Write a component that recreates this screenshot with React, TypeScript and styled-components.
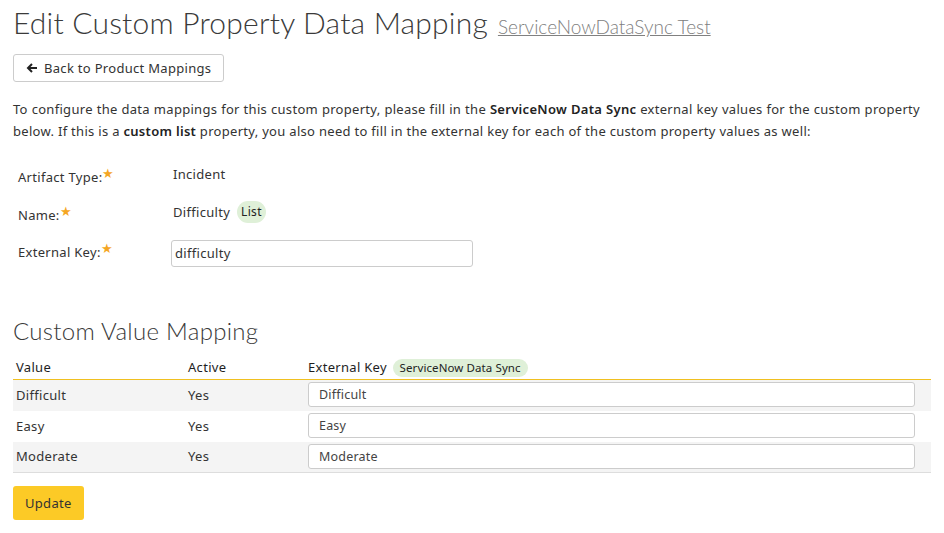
import React from 'react';
import styled, { createGlobalStyle } from 'styled-components';

const GlobalStyle = createGlobalStyle`
  body {
    margin: 0;
    background: #fff;
    color: #333;
    font-family: "Noto Sans", "Open Sans", sans-serif;
    font-size: 13px;
    letter-spacing: 0.3px;
  }
`;

const Page = styled.div`
  padding: 0 13px 14px 13px;
  width: 918px;
`;

const TitleRow = styled.div`
  display: flex;
  align-items: baseline;
  gap: 10px;
  height: 44px;
`;

const Title = styled.h1`
  margin: 0;
  font-family: "Lato", sans-serif;
  font-weight: 300;
  font-size: 30px;
  line-height: 44px;
  color: #3a3a3a;
  letter-spacing: 0.2px;
`;

const SubLink = styled.a`
  font-family: "Lato", sans-serif;
  font-weight: 300;
  font-size: 19px;
  color: #808080;
  text-decoration: underline;
  letter-spacing: 0;
`;

const BackButton = styled.button`
  display: inline-flex;
  align-items: center;
  gap: 6px;
  height: 28px;
  margin-top: 10px;
  padding: 0 12px;
  background: #fff;
  border: 1px solid #ccc;
  border-radius: 3px;
  font-family: inherit;
  font-size: 13px;
  letter-spacing: 0.3px;
  color: #333;
`;

const Intro = styled.p`
  margin: 16px 11px 0 0;
  line-height: 22px;
  text-align: justify;
  color: #333;

  b {
    font-weight: 600;
    color: #222;
  }
`;

const Form = styled.div`
  display: grid;
  grid-template-columns: 158px 302px;
  grid-auto-rows: 38px;
  margin-top: 13px;
  align-items: center;
`;

const Label = styled.div<{ $offset?: number }>`
  padding-left: 5px;
  padding-top: ${(p) => p.$offset ?? 6}px;
  color: #333;
`;

const Star = styled.sup`
  color: #f5a623;
  font-size: 13px;
  vertical-align: 4px;
  line-height: 0;
`;

const Value = styled.div`
  display: flex;
  align-items: center;
  gap: 5px;
  padding-left: 2px;
  color: #333;
`;

const Pill = styled.span<{ $small?: boolean }>`
  display: inline-block;
  background: #dff0d8;
  border-radius: 11px;
  padding: ${(p) => (p.$small ? '1px 7px' : '3px 4px')};
  line-height: 16px;
  font-size: ${(p) => (p.$small ? '11.5px' : '12px')};
  font-weight: 400;
  letter-spacing: ${(p) => (p.$small ? '0.1px' : '0.3px')};
  color: #222;
  margin-left: 2px;
`;

const TextInput = styled.input`
  box-sizing: border-box;
  width: calc(100% + 2px);
  height: 27px;
  margin: 6px 0 0 -2px;
  border: 1px solid #ccc;
  border-radius: 3px;
  padding: 0 3px;
  font-family: inherit;
  font-size: 13px;
  letter-spacing: 0.3px;
  color: #333;
`;

const SectionTitle = styled.h2`
  margin: 47px 0 0 0;
  font-family: "Lato", sans-serif;
  font-weight: 300;
  font-size: 24px;
  line-height: 29px;
  color: #3a3a3a;
  letter-spacing: 0.3px;
`;

const Table = styled.table`
  width: 918px;
  border-collapse: collapse;
  margin-top: 10px;

  th {
    text-align: left;
    font-weight: 400;
    height: 24px;
    padding: 0 3px;
    border-bottom: 1px solid #f0c020;
    color: #1e1e1e;
  }

  td {
    height: 31px;
    box-sizing: border-box;
    padding: 0 16px 1px 3px;
    vertical-align: middle;
    color: #333;
  }

  tbody tr:nth-child(odd) {
    background: #f4f4f4;
  }

  tbody tr:last-child td {
    border-bottom: 1px solid #ddd;
  }
`;

const CellInput = styled.input`
  display: block;
  box-sizing: border-box;
  width: 100%;
  height: 25px;
  border: 1px solid #ccc;
  border-radius: 3px;
  padding: 0 10px;
  font-family: inherit;
  font-size: 12.5px;
  letter-spacing: 0.2px;
  color: #444;
  background: #fff;
`;

const UpdateButton = styled.button`
  margin-top: 13px;
  height: 34px;
  padding: 0 12px;
  background: #fcca26;
  border: none;
  border-radius: 3px;
  font-family: inherit;
  font-size: 13px;
  letter-spacing: 0.3px;
  color: #333;
`;

const rows = ['Difficult', 'Easy', 'Moderate'];

export default function App() {
  return (
    <>
      <GlobalStyle />
      <Page>
        <TitleRow>
          <Title>Edit Custom Property Data Mapping</Title>
          <SubLink href="#">ServiceNowDataSync Test</SubLink>
        </TitleRow>
        <BackButton type="button">
          <svg width="12" height="12" viewBox="0 0 12 12">
            <path d="M11 6H2.5M6 2L2 6l4 4" stroke="#222" strokeWidth="2" fill="none" />
          </svg>
          Back to Product Mappings
        </BackButton>
        <Intro>
          To configure the data mappings for this custom property, please fill in the <b>ServiceNow Data Sync</b> external key values for the custom property below. If this is a <b>custom list</b> property, you also need to fill in the external key for each of the custom property values as well:
        </Intro>
        <Form>
          <Label>
            Artifact Type:<Star>★</Star>
          </Label>
          <Value>Incident</Value>
          <Label>
            Name:<Star>★</Star>
          </Label>
          <Value>
            Difficulty <Pill>List</Pill>
          </Value>
          <Label $offset={4}>
            External Key:<Star>★</Star>
          </Label>
          <Value>
            <TextInput defaultValue="difficulty" />
          </Value>
        </Form>
        <SectionTitle>Custom Value Mapping</SectionTitle>
        <Table>
          <thead>
            <tr>
              <th style={{ width: 166 }}>Value</th>
              <th style={{ width: 114 }}>Active</th>
              <th>
                External Key <Pill $small>ServiceNow Data Sync</Pill>
              </th>
            </tr>
          </thead>
          <tbody>
            {rows.map((r) => (
              <tr key={r}>
                <td>{r}</td>
                <td>Yes</td>
                <td>
                  <CellInput defaultValue={r} />
                </td>
              </tr>
            ))}
          </tbody>
        </Table>
        <UpdateButton type="button">Update</UpdateButton>
      </Page>
    </>
  );
}
